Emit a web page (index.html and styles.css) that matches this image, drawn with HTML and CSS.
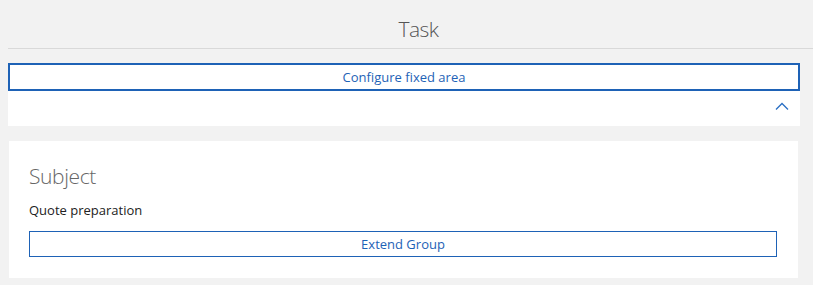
FILE: index.html
```html
<!DOCTYPE html>
<html lang="en">
<head>
    <meta charset="UTF-8">
    <title>Task</title>
    <link rel="stylesheet" href="styles.css">
</head>
<body>
    <header class="page-header">
        <h1>Task</h1>
    </header>
    <section class="fixed-area">
        <button class="btn btn-strong">Configure fixed area</button>
        <div class="collapse-row">
            <svg class="chevron" width="14" height="8" viewBox="0 0 14 8">
                <path d="M1 7.5 L7 1.5 L13 7.5" fill="none" stroke="#2a6fc4" stroke-width="1.3"/>
            </svg>
        </div>
    </section>
    <section class="group-card">
        <h2>Subject</h2>
        <p class="value">Quote preparation</p>
        <button class="btn">Extend Group</button>
    </section>
</body>
</html>
```

FILE: styles.css
```css
body {
    margin: 0;
    background-color: #f2f2f2;
    font-family: "Open Sans", "Noto Sans", sans-serif;
    color: #222222;
}

.page-header {
    margin-left: 8px;
    height: 48px;
    border-bottom: 1px solid #d9d9d9;
    display: flex;
    justify-content: center;
    align-items: center;
    padding-left: 16px;
}

.page-header h1 {
    margin: 10px 0 0 0;
    font-size: 21px;
    font-weight: 300;
    color: #555555;
    letter-spacing: -0.5px;
}

.fixed-area {
    margin: 14px 13px 0 8px;
    background-color: #ffffff;
}

.btn {
    display: block;
    width: 100%;
    box-sizing: border-box;
    background-color: #ffffff;
    border: 1px solid #1e62b6;
    color: #1e62b6;
    font-family: inherit;
    font-size: 13px;
    height: 26px;
    padding: 0;
    cursor: pointer;
}

.btn-strong {
    border-width: 2px;
    height: 28px;
}

.collapse-row {
    height: 35px;
    display: flex;
    justify-content: flex-end;
    align-items: flex-start;
    padding-right: 11px;
}

.chevron {
    margin-top: 11px;
}

.group-card {
    margin: 15px 15px 7px 9px;
    background-color: #ffffff;
    padding: 21px 21px 21px 20px;
}

.group-card h2 {
    margin: 0;
    font-size: 21px;
    font-weight: 300;
    color: #666666;
    letter-spacing: -0.4px;
    line-height: 28px;
}

.value {
    margin: 11px 0 12px 0;
    font-size: 13px;
    line-height: 18px;
}
```
